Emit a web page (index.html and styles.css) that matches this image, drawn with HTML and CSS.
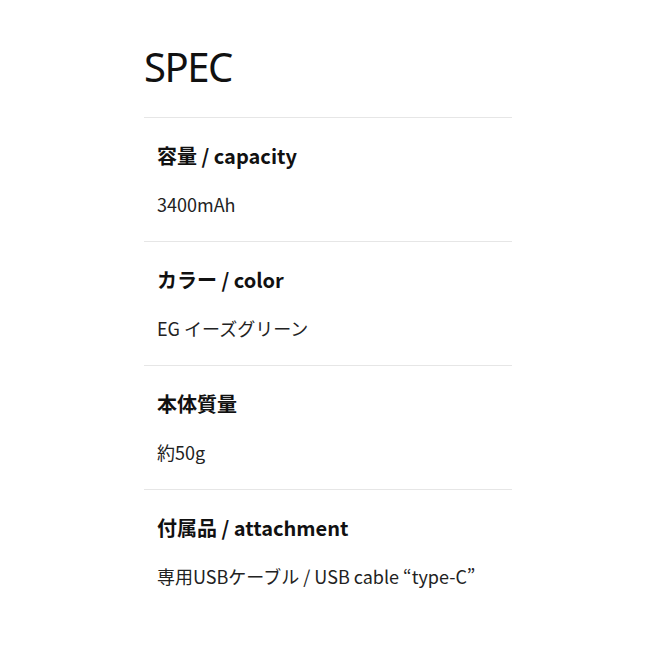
FILE: index.html
```html
<!DOCTYPE html>
<html lang="ja">
<head>
<meta charset="utf-8">
<title>SPEC</title>
<link rel="stylesheet" href="styles.css">
</head>
<body>
<section class="spec">
  <h1 class="spec-title">SPEC</h1>
  <dl class="spec-list">
    <div class="spec-item">
      <dt class="spec-label">容量 / capacity</dt>
      <dd class="spec-value">3400mAh</dd>
    </div>
    <div class="spec-item">
      <dt class="spec-label">カラー / color</dt>
      <dd class="spec-value">EG イーズグリーン</dd>
    </div>
    <div class="spec-item">
      <dt class="spec-label">本体質量</dt>
      <dd class="spec-value">約50g</dd>
    </div>
    <div class="spec-item">
      <dt class="spec-label">付属品 / attachment</dt>
      <dd class="spec-value">専用USBケーブル / USB cable “type-C”</dd>
    </div>
  </dl>
</section>
</body>
</html>
```

FILE: styles.css
```css
html, body {
  margin: 0;
  padding: 0;
  background: #ffffff;
}

body {
  font-family: "Noto Sans CJK JP", "Noto Sans", sans-serif;
  color: #1a1a1a;
}

.spec {
  width: 368px;
  margin: 0 0 0 144px;
  padding-top: 43px;
}

.spec-title {
  margin: 0 0 26px;
  font-family: "Noto Sans", "Noto Sans CJK JP", sans-serif;
  font-size: 40px;
  line-height: 48px;
  font-weight: 400;
  color: #111111;
  letter-spacing: -1.5px;
}

.spec-list {
  margin: 0;
  padding: 0;
}

.spec-item {
  border-top: 1px solid #e6e6e6;
  padding: 24px 13px 23px;
  display: flex;
  flex-direction: column;
  gap: 20px;
}

.spec-label {
  margin: 0;
  font-size: 20px;
  line-height: 28px;
  font-weight: 700;
  color: #111111;
}

.spec-value {
  margin: 0;
  font-size: 18px;
  line-height: 28px;
  font-weight: 400;
  color: #222222;
}
```
